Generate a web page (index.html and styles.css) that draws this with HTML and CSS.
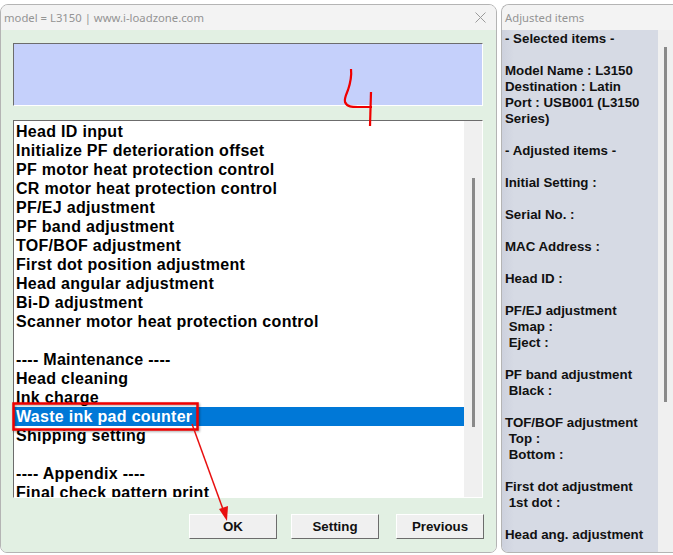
FILE: index.html
```html
<!DOCTYPE html>
<html lang="en">
<head>
    <meta charset="UTF-8">
    <title>model = L3150 | www.i-loadzone.com</title>
    <link rel="stylesheet" href="styles.css">
</head>
<body>

<div class="desktop">
    <div class="window main-window">
        <div class="title-bar">
            <span class="title">model = L3150 | www.i-loadzone.com</span>
            <svg class="close-icon" width="11" height="11" viewBox="0 0 11 11">
                <path d="M0.5 0.5L10.5 10.5M10.5 0.5L0.5 10.5" stroke="#9a9a9a" stroke-width="1" fill="none"/>
            </svg>
        </div>
        <div class="main-body">
            <div class="message-box"></div>
            <div class="list-box">
                <div class="list-items">
                    <div class="item">Head ID input</div>
                    <div class="item">Initialize PF deterioration offset</div>
                    <div class="item">PF motor heat protection control</div>
                    <div class="item">CR motor heat protection control</div>
                    <div class="item">PF/EJ adjustment</div>
                    <div class="item">PF band adjustment</div>
                    <div class="item">TOF/BOF adjustment</div>
                    <div class="item">First dot position adjustment</div>
                    <div class="item">Head angular adjustment</div>
                    <div class="item">Bi-D adjustment</div>
                    <div class="item">Scanner motor heat protection control</div>
                    <div class="item">&nbsp;</div>
                    <div class="item">---- Maintenance ----</div>
                    <div class="item">Head cleaning</div>
                    <div class="item">Ink charge</div>
                    <div class="item selected">Waste ink pad counter</div>
                    <div class="item">Shipping setting</div>
                    <div class="item">&nbsp;</div>
                    <div class="item">---- Appendix ----</div>
                    <div class="item">Final check pattern print</div>
                </div>
                <div class="list-scroll"><div class="list-thumb"></div></div>
            </div>
            <div class="buttons">
                <button class="btn">OK</button>
                <button class="btn">Setting</button>
                <button class="btn btn-previous">Previous</button>
            </div>
        </div>
    </div>

    <div class="window side-window">
        <div class="title-bar">
            <span class="title">Adjusted items</span>
        </div>
        <div class="side-body">
            <div class="side-text">
                <p>- Selected items -</p>
                <p>Model Name : L3150<br>Destination : Latin<br>Port : USB001 (L3150 Series)</p>
                <p>- Adjusted items -</p>
                <p>Initial Setting :</p>
                <p>Serial No. :</p>
                <p>MAC Address :</p>
                <p>Head ID :</p>
                <p>PF/EJ adjustment<br>&nbsp;Smap :<br>&nbsp;Eject :</p>
                <p>PF band adjustment<br>&nbsp;Black :</p>
                <p>TOF/BOF adjustment<br>&nbsp;Top :<br>&nbsp;Bottom :</p>
                <p>First dot adjustment<br>&nbsp;1st dot :</p>
                <p>Head ang. adjustment</p>
            </div>
            <div class="side-scroll"><div class="side-thumb"></div></div>
        </div>
    </div>

    <!-- hand drawn marks on top of the screenshot -->
    <svg class="marks" width="673" height="555" viewBox="0 0 673 555">
        <path d="M351 69C352 78 350 84 348 90C346 95 344 99 345 102C347 107 352 107 358 107L372 107" stroke="#f00000" stroke-width="2.2" fill="none"/>
        <path d="M371 92L370 126" stroke="#f00000" stroke-width="2.2" fill="none"/>
        <rect class="mark-box" x="13.5" y="403.5" width="184" height="26" stroke="#f00000" stroke-width="2.5" fill="none"/>
        <path d="M192 424L224 512" stroke="#e81010" stroke-width="1.5" fill="none"/>
        <path d="M219 509L227 521L228 506Z" fill="#e81010"/>
    </svg>
</div>

</body>
</html>
```

FILE: styles.css
```css
body {
    margin: 0;
    background: white;
    font-family: "Liberation Sans", Arial, sans-serif;
}
.desktop {
    position: relative;
    width: 673px;
    height: 555px;
    overflow: hidden;
    display: flex;
    gap: 4px;
    padding-top: 4px;
    box-sizing: border-box;
}
.window {
    display: flex;
    flex-direction: column;
    height: 549px;
    box-sizing: border-box;
    border: 1px solid #b4b4b4;
    border-radius: 8px 8px 7px 7px;
    overflow: hidden;
    background: #f3f3f3;
}
.main-window {
    width: 497px;
    flex-shrink: 0;
}
.side-window {
    width: 172px;
    flex-shrink: 0;
    border-right: none;
    border-radius: 8px 0 0 7px;
}
.title-bar {
    display: flex;
    align-items: center;
    justify-content: space-between;
    height: 25px;
    flex-shrink: 0;
    padding: 0 10px 0 3px;
    background: #f3f3f3;
}
.title {
    font-family: "Noto Sans", sans-serif;
    font-size: 11.3px;
    color: #949494;
}
.main-body {
    flex: 1;
    display: flex;
    flex-direction: column;
    background: #e2f0e3;
    padding: 13px 13px 0 12px;
}
.message-box {
    height: 63px;
    box-sizing: border-box;
    background: #c5d0fb;
    border: 1px solid;
    border-color: #6c6c6c #ffffff #ffffff #6c6c6c;
}
.list-box {
    display: flex;
    height: 378px;
    margin-top: 14px;
    box-sizing: border-box;
    background: white;
    border: 1px solid;
    border-color: #6c6c6c #ffffff #ffffff #6c6c6c;
    overflow: hidden;
}
.list-items {
    flex: 1;
    padding-top: 1px;
}
.item {
    height: 19px;
    line-height: 19px;
    padding-left: 2px;
    font-size: 16px;
    font-weight: bold;
    letter-spacing: 0.3px;
    color: black;
    white-space: nowrap;
}
.item.selected {
    background: #0078d7;
    color: white;
}
.list-scroll {
    width: 18px;
    background: #f0f0f0;
    display: flex;
    justify-content: center;
}
.list-thumb {
    width: 3px;
    height: 249px;
    margin-top: 57px;
    background: #8a8a8a;
}
.buttons {
    display: flex;
    justify-content: flex-end;
    gap: 14px;
    margin: 16px -1px 0 0;
}
.btn {
    width: 88px;
    height: 25px;
    padding: 0;
    background: #f0f0f0;
    border: 1px solid;
    border-color: #ffffff #6c6c6c #6c6c6c #ffffff;
    font-family: "Liberation Sans", Arial, sans-serif;
    font-size: 13.3px;
    font-weight: bold;
    color: #111;
}
.btn-previous {
    margin-left: 3px;
}
.side-body {
    flex: 1;
    display: flex;
    min-height: 0;
}
.side-text {
    flex: 1;
    overflow: hidden;
    padding: 1px 3px 0;
    background: linear-gradient(90deg, #cdd1dd, #d6dae4 12px);
    font-size: 13.3px;
    font-weight: bold;
    line-height: 16px;
    color: #111;
}
.side-text p {
    margin: 0 0 16px;
}
.side-scroll {
    width: 15px;
    background: #f0f0f0;
    display: flex;
    justify-content: center;
}
.side-thumb {
    width: 3px;
    height: 355px;
    margin-top: 17px;
    background: #8a8a8a;
}
.marks {
    position: absolute;
    left: 0;
    top: 0;
    pointer-events: none;
}
.mark-box {
    filter: drop-shadow(1px 1px 1px rgba(0, 0, 0, 0.35));
}
```
